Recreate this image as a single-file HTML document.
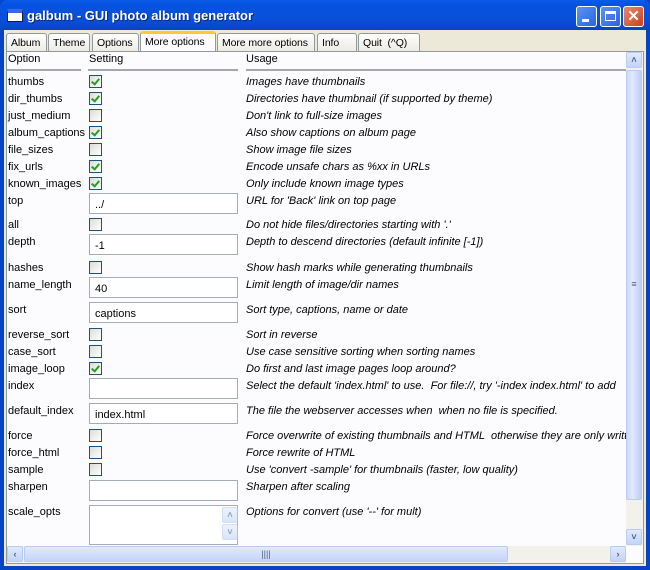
<!DOCTYPE html>
<html><head><style>
*{box-sizing:border-box;margin:0;padding:0}
body{width:650px;height:570px;overflow:hidden;font-family:"Liberation Sans",sans-serif;font-size:11px;color:#000;background:#0842c8;position:relative}
.win{position:absolute;left:0;top:0;width:650px;height:570px;border-radius:7px 7px 0 0;background:linear-gradient(#0a5ce8,#0553e0 4px,#0a4fd8 20px,#0744c4 30px);}
.title{position:absolute;left:27px;top:8px;color:#fff;font-weight:bold;font-size:13px;text-shadow:1px 1px #0a2a7a}
.ticon{position:absolute;left:7px;top:9px;width:16px;height:13px;background:#fff;border:1px solid #123;border-top:4px solid #3a6ad8}
.btn{position:absolute;top:6px;width:21px;height:21px;border:1px solid #fff;border-radius:3px;background:linear-gradient(135deg,#5b95f6,#2a62e0);}
.btn.x{background:linear-gradient(135deg,#e88a6a,#c9411c)}
.client{position:absolute;left:4px;top:30px;width:642px;height:536px;background:#ece9d8}
.tab{position:absolute;top:33px;height:18px;border:1px solid #919b9c;border-bottom:none;border-radius:3px 3px 0 0;background:linear-gradient(#fff,#ecebe5);padding:3px 0 0 4px;font-size:10.5px;white-space:nowrap;overflow:hidden;letter-spacing:-0.1px}
.tab.on{top:31px;height:21px;background:#fcfcfe;border-top:3px solid #ffc83c;padding-top:2px}
.panel{position:absolute;left:6px;top:51px;width:638px;height:513px;background:#fcfcfe;border:1px solid #919b9c}
.t{position:absolute;white-space:nowrap;line-height:13px}
.u{font-style:italic}
.cb{position:absolute;left:89px;width:13px;height:13px;border:1px solid #1c5180;background:linear-gradient(135deg,#dcdcd6,#fff)}
.cb.c::after{content:"";position:absolute;left:3px;top:1px;width:3px;height:6px;border:solid #21a121;border-width:0 2px 2px 0;transform:rotate(40deg)}
.en{position:absolute;left:89px;width:149px;height:21px;border:1px solid #a5acb5;background:#fff;padding:5px 0 0 5px}
.hl{position:absolute;top:69px;height:2px;background:#a0a8b0}
.sb{position:absolute;background:#f3f1ec}
.sbtn{position:absolute;width:16px;height:16px;border:1px solid #b8cbf0;border-radius:2px;background:linear-gradient(#e0eafe,#c2d4f8);color:#4d6185;font-size:9px;font-weight:bold;text-align:center;line-height:14px}
</style></head><body>
<div class="win"></div>
<div class="ticon"></div>
<div class="title">galbum - GUI photo album generator</div>
<div class="btn" style="left:576px"><div style="position:absolute;left:5px;top:12px;width:7px;height:3px;background:#fff"></div></div>
<div class="btn" style="left:600px"><div style="position:absolute;left:4px;top:4px;width:11px;height:10px;border:1px solid #fff;border-top:3px solid #fff"></div></div>
<div class="btn x" style="left:623px;color:#fff;font-weight:bold;font-size:15px;text-align:center;line-height:19px">✕</div>
<div class="client"></div>
<div class="tab" style="left:6px;width:41px">Album</div>
<div class="tab" style="left:48px;width:42px">Theme</div>
<div class="tab" style="left:92px;width:47px">Options</div>
<div class="tab on" style="left:140px;width:76px">More options</div>
<div class="tab" style="left:217px;width:98px">More more options</div>
<div class="tab" style="left:317px;width:40px">Info</div>
<div class="tab" style="left:358px;width:62px">Quit &nbsp;(^Q)</div>
<div class="panel"></div>

<div class="t" style="left:8px;top:53px">Option</div>
<div class="t" style="left:89px;top:53px">Setting</div>
<div class="t" style="left:246px;top:53px">Usage</div>
<div class="hl" style="left:7px;width:74px"></div>
<div class="hl" style="left:88px;width:150px"></div>
<div class="hl" style="left:246px;width:380px"></div>

<div class="t" style="left:8px;top:76px">thumbs</div><div class="cb c" style="top:75px"></div><div class="t u" style="left:246px;top:76px">Images have thumbnails</div>
<div class="t" style="left:8px;top:93px">dir_thumbs</div><div class="cb c" style="top:92px"></div><div class="t u" style="left:246px;top:93px">Directories have thumbnail (if supported by theme)</div>
<div class="t" style="left:8px;top:110px">just_medium</div><div class="cb" style="top:109px"></div><div class="t u" style="left:246px;top:110px">Don't link to full-size images</div>
<div class="t" style="left:8px;top:127px">album_captions</div><div class="cb c" style="top:126px"></div><div class="t u" style="left:246px;top:127px">Also show captions on album page</div>
<div class="t" style="left:8px;top:144px">file_sizes</div><div class="cb" style="top:143px"></div><div class="t u" style="left:246px;top:144px">Show image file sizes</div>
<div class="t" style="left:8px;top:161px">fix_urls</div><div class="cb c" style="top:160px"></div><div class="t u" style="left:246px;top:161px">Encode unsafe chars as %xx in URLs</div>
<div class="t" style="left:8px;top:178px">known_images</div><div class="cb c" style="top:177px"></div><div class="t u" style="left:246px;top:178px">Only include known image types</div>
<div class="t" style="left:8px;top:195px">top</div><div class="en" style="top:193px">../</div><div class="t u" style="left:246px;top:195px">URL for 'Back' link on top page</div>
<div class="t" style="left:8px;top:219px">all</div><div class="cb" style="top:218px"></div><div class="t u" style="left:246px;top:219px">Do not hide files/directories starting with '.'</div>
<div class="t" style="left:8px;top:236px">depth</div><div class="en" style="top:234px">-1</div><div class="t u" style="left:246px;top:236px">Depth to descend directories (default infinite [-1])</div>
<div class="t" style="left:8px;top:262px">hashes</div><div class="cb" style="top:261px"></div><div class="t u" style="left:246px;top:262px">Show hash marks while generating thumbnails</div>
<div class="t" style="left:8px;top:279px">name_length</div><div class="en" style="top:277px">40</div><div class="t u" style="left:246px;top:279px">Limit length of image/dir names</div>
<div class="t" style="left:8px;top:304px">sort</div><div class="en" style="top:302px">captions</div><div class="t u" style="left:246px;top:304px">Sort type, captions, name or date</div>
<div class="t" style="left:8px;top:329px">reverse_sort</div><div class="cb" style="top:328px"></div><div class="t u" style="left:246px;top:329px">Sort in reverse</div>
<div class="t" style="left:8px;top:346px">case_sort</div><div class="cb" style="top:345px"></div><div class="t u" style="left:246px;top:346px">Use case sensitive sorting when sorting names</div>
<div class="t" style="left:8px;top:363px">image_loop</div><div class="cb c" style="top:362px"></div><div class="t u" style="left:246px;top:363px">Do first and last image pages loop around?</div>
<div class="t" style="left:8px;top:380px">index</div><div class="en" style="top:378px"></div><div class="t u" style="left:246px;top:380px">Select the default 'index.html' to use. &nbsp;For file://, try '-index index.html' to add</div>
<div class="t" style="left:8px;top:405px">default_index</div><div class="en" style="top:403px">index.html</div><div class="t u" style="left:246px;top:405px">The file the webserver accesses when &nbsp;when no file is specified.</div>
<div class="t" style="left:8px;top:430px">force</div><div class="cb" style="top:429px"></div><div class="t u" style="left:246px;top:430px;width:380px;overflow:hidden">Force overwrite of existing thumbnails and HTML &nbsp;otherwise they are only writt</div>
<div class="t" style="left:8px;top:447px">force_html</div><div class="cb" style="top:446px"></div><div class="t u" style="left:246px;top:447px">Force rewrite of HTML</div>
<div class="t" style="left:8px;top:464px">sample</div><div class="cb" style="top:463px"></div><div class="t u" style="left:246px;top:464px">Use 'convert -sample' for thumbnails (faster, low quality)</div>
<div class="t" style="left:8px;top:481px">sharpen</div><div class="en" style="top:480px"></div><div class="t u" style="left:246px;top:481px">Sharpen after scaling</div>
<div class="t" style="left:8px;top:506px">scale_opts</div><div class="en" style="top:505px;height:40px"></div><div class="t u" style="left:246px;top:506px">Options for convert (use '--' for mult)</div>
<div class="sbtn" style="left:222px;top:507px;opacity:.6">˄</div>
<div class="sbtn" style="left:222px;top:524px;opacity:.6">˅</div>

<div class="sb" style="left:626px;top:52px;width:17px;height:494px"></div>
<div class="sbtn" style="left:626px;top:52px">˄</div>
<div class="sbtn" style="left:626px;top:70px;height:430px;background:linear-gradient(90deg,#cad8fb,#e2eafd 40%,#bccdf6);line-height:427px;font-weight:normal">≡</div>
<div class="sbtn" style="left:626px;top:529px">˅</div>
<div class="sb" style="left:7px;top:546px;width:619px;height:17px"></div>
<div class="sbtn" style="left:7px;top:546px">‹</div>
<div class="sbtn" style="left:24px;top:546px;width:484px;background:linear-gradient(#e2eafd,#c4d4f8);font-weight:normal">||||</div>
<div class="sbtn" style="left:610px;top:546px">›</div>
</body></html>
